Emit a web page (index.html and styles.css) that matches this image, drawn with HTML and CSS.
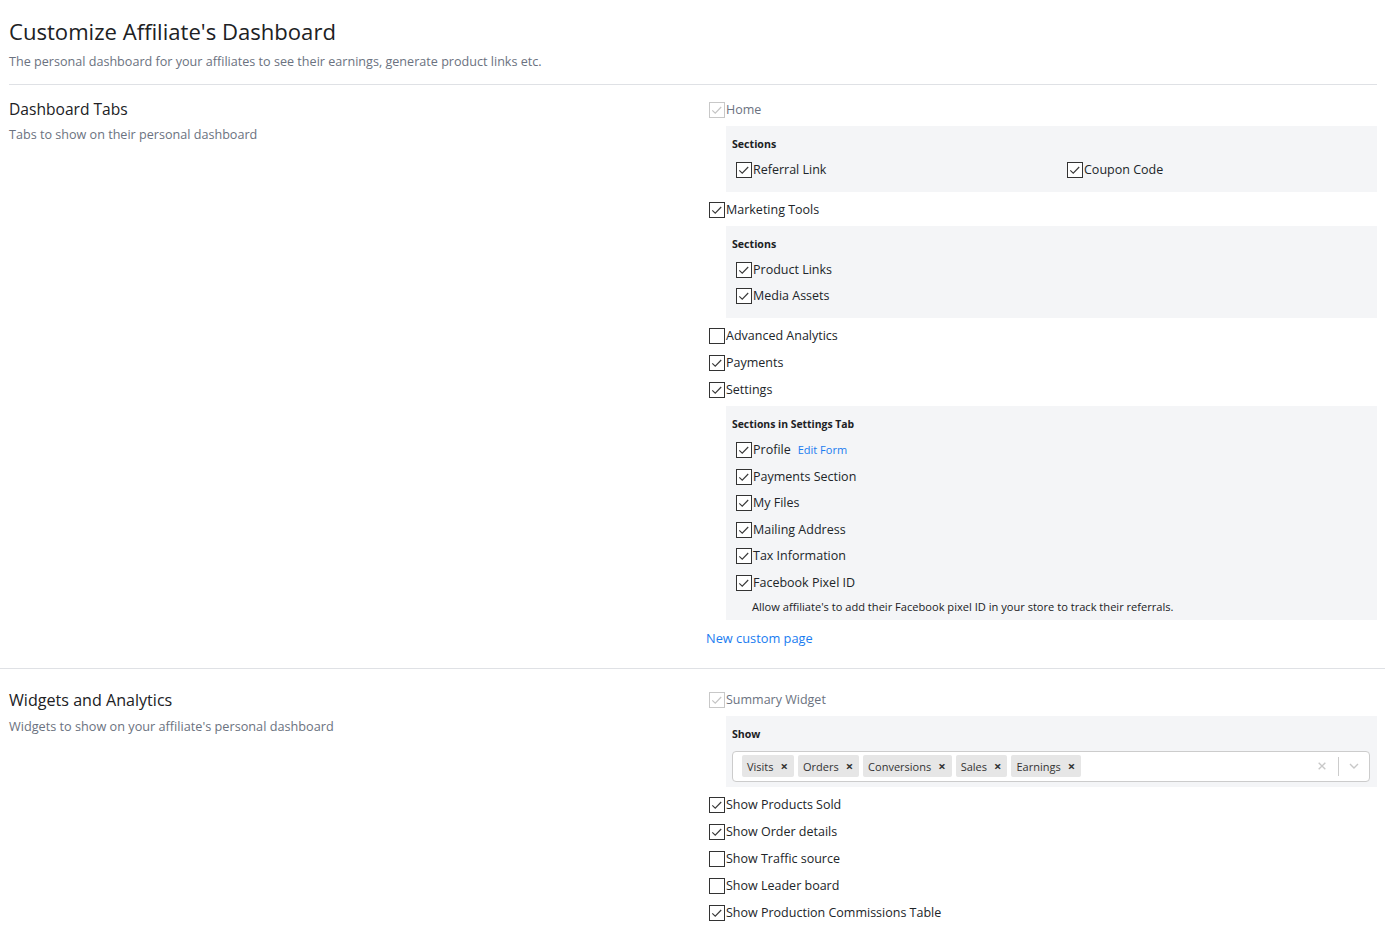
FILE: index.html
```html
<!DOCTYPE html>
<html lang="en">
<head>
<meta charset="utf-8">
<title>Customize Affiliate's Dashboard</title>
<link rel="stylesheet" href="styles.css">
</head>
<body>
<div class="page">
  <header class="page-head">
    <h1 class="page-title">Customize Affiliate's Dashboard</h1>
    <p class="page-sub">The personal dashboard for your affiliates to see their earnings, generate product links etc.</p>
  </header>

  <section class="setting setting-tabs">
    <div class="setting-info">
      <h2 class="setting-title">Dashboard Tabs</h2>
      <p class="setting-desc">Tabs to show on their personal dashboard</p>
    </div>
    <div class="setting-body">
      <label class="row disabled"><span class="cb on"><svg viewBox="0 0 16 16"><path d="M2.6 8.4 L6 11.6 L12.8 4.6"/></svg></span>Home</label>
      <div class="panel">
        <div class="panel-label">Sections</div>
        <div class="grid2">
          <label class="row"><span class="cb on"><svg viewBox="0 0 16 16"><path d="M2.6 8.4 L6 11.6 L12.8 4.6"/></svg></span>Referral Link</label>
          <label class="row"><span class="cb on"><svg viewBox="0 0 16 16"><path d="M2.6 8.4 L6 11.6 L12.8 4.6"/></svg></span>Coupon Code</label>
        </div>
      </div>
      <label class="row"><span class="cb on"><svg viewBox="0 0 16 16"><path d="M2.6 8.4 L6 11.6 L12.8 4.6"/></svg></span>Marketing Tools</label>
      <div class="panel">
        <div class="panel-label">Sections</div>
        <div class="list list-tight">
          <label class="row"><span class="cb on"><svg viewBox="0 0 16 16"><path d="M2.6 8.4 L6 11.6 L12.8 4.6"/></svg></span>Product Links</label>
          <label class="row"><span class="cb on"><svg viewBox="0 0 16 16"><path d="M2.6 8.4 L6 11.6 L12.8 4.6"/></svg></span>Media Assets</label>
        </div>
      </div>
      <label class="row"><span class="cb"></span>Advanced Analytics</label>
      <label class="row"><span class="cb on"><svg viewBox="0 0 16 16"><path d="M2.6 8.4 L6 11.6 L12.8 4.6"/></svg></span>Payments</label>
      <label class="row"><span class="cb on"><svg viewBox="0 0 16 16"><path d="M2.6 8.4 L6 11.6 L12.8 4.6"/></svg></span>Settings</label>
      <div class="panel panel-settings">
        <div class="panel-label">Sections in Settings Tab</div>
        <div class="list">
          <label class="row"><span class="cb on"><svg viewBox="0 0 16 16"><path d="M2.6 8.4 L6 11.6 L12.8 4.6"/></svg></span>Profile <a class="edit-link" href="#">Edit Form</a></label>
          <label class="row"><span class="cb on"><svg viewBox="0 0 16 16"><path d="M2.6 8.4 L6 11.6 L12.8 4.6"/></svg></span>Payments Section</label>
          <label class="row"><span class="cb on"><svg viewBox="0 0 16 16"><path d="M2.6 8.4 L6 11.6 L12.8 4.6"/></svg></span>My Files</label>
          <label class="row"><span class="cb on"><svg viewBox="0 0 16 16"><path d="M2.6 8.4 L6 11.6 L12.8 4.6"/></svg></span>Mailing Address</label>
          <label class="row"><span class="cb on"><svg viewBox="0 0 16 16"><path d="M2.6 8.4 L6 11.6 L12.8 4.6"/></svg></span>Tax Information</label>
          <label class="row"><span class="cb on"><svg viewBox="0 0 16 16"><path d="M2.6 8.4 L6 11.6 L12.8 4.6"/></svg></span>Facebook Pixel ID</label>
        </div>
        <p class="hint">Allow affiliate's to add their Facebook pixel ID in your store to track their referrals.</p>
      </div>
      <a class="new-page" href="#">New custom page</a>
    </div>
  </section>

  <section class="setting setting-widgets">
    <div class="setting-info">
      <h2 class="setting-title">Widgets and Analytics</h2>
      <p class="setting-desc">Widgets to show on your affiliate's personal dashboard</p>
    </div>
    <div class="setting-body">
      <label class="row disabled"><span class="cb on"><svg viewBox="0 0 16 16"><path d="M2.6 8.4 L6 11.6 L12.8 4.6"/></svg></span>Summary Widget</label>
      <div class="panel panel-show">
        <div class="panel-label">Show</div>
        <div class="multiselect">
          <div class="chips">
            <span class="chip">Visits<span class="chip-x">×</span></span>
            <span class="chip">Orders<span class="chip-x">×</span></span>
            <span class="chip">Conversions<span class="chip-x">×</span></span>
            <span class="chip">Sales<span class="chip-x">×</span></span>
            <span class="chip">Earnings<span class="chip-x">×</span></span>
          </div>
          <div class="indicators">
            <svg class="ind-clear" viewBox="0 0 12 12"><path d="M2 2 L10 10 M10 2 L2 10"/></svg>
            <span class="ind-sep"></span>
            <svg class="ind-chev" viewBox="0 0 12 12"><path d="M2 4 L6 8 L10 4"/></svg>
          </div>
        </div>
      </div>
      <label class="row"><span class="cb on"><svg viewBox="0 0 16 16"><path d="M2.6 8.4 L6 11.6 L12.8 4.6"/></svg></span>Show Products Sold</label>
      <label class="row"><span class="cb on"><svg viewBox="0 0 16 16"><path d="M2.6 8.4 L6 11.6 L12.8 4.6"/></svg></span>Show Order details</label>
      <label class="row"><span class="cb"></span>Show Traffic source</label>
      <label class="row"><span class="cb"></span>Show Leader board</label>
      <label class="row"><span class="cb on"><svg viewBox="0 0 16 16"><path d="M2.6 8.4 L6 11.6 L12.8 4.6"/></svg></span>Show Production Commissions Table</label>
    </div>
  </section>
</div>
</body>
</html>
```

FILE: styles.css
```css
* { box-sizing: border-box; }
html, body { margin: 0; padding: 0; background: #fff; }
body {
  font-family: "Open Sans", "Noto Sans", sans-serif;
  color: #212529;
  font-size: 13px;
}
.page { width: 1385px; }

.page-head {
  margin: 0 8px 0 9px;
  padding: 15px 0 14px;
  border-bottom: 1px solid #dfe1e5;
}
.page-title {
  margin: 0;
  font-size: 22.1px;
  font-weight: 400;
  line-height: 32px;
  color: #202124;
}
.page-sub {
  margin: 7px 0 0;
  font-size: 12.6px;
  line-height: 16px;
  color: #6b7280;
}

.setting {
  display: grid;
  grid-template-columns: 709px 1fr;
  padding-right: 8px;
}
.setting-tabs { padding-top: 17px; padding-bottom: 22px; border-bottom: 1px solid #dfe1e5; }
.setting-widgets { padding-top: 23px; }

.setting-info { padding-left: 9px; }
.setting-title {
  margin: -5px 0 0;
  font-size: 15.6px;
  font-weight: 400;
  line-height: 24px;
  color: #202124;
}
.setting-desc {
  margin: 6px 0 0;
  font-size: 12.6px;
  line-height: 16px;
  color: #6b7280;
}
.setting-widgets .setting-title { margin-top: -4px; font-size: 16.1px; }
.setting-widgets .setting-desc { font-size: 12.7px; margin-top: 6px; }

.setting-body { display: flex; flex-direction: column; align-items: flex-start; }

.row {
  display: flex;
  align-items: center;
  height: 16px;
  font-size: 12.5px;
  line-height: 16px;
  color: #212529;
  white-space: nowrap;
}
.row.disabled { color: #6b7280; }
.row + .row { margin-top: 11px; }
.row + .panel { margin-top: 8px; }
.panel + .row { margin-top: 10px; }

.cb {
  width: 16px;
  height: 16px;
  margin-right: 1px;
  border: 1px solid #333;
  background: #fff;
  flex: none;
  display: block;
}
.cb svg { display: block; width: 14px; height: 14px; }
.cb svg path { fill: none; stroke: #3a3a3a; stroke-width: 1.35; }
.disabled .cb { border-color: #c8c8c8; }
.disabled .cb svg path { stroke: #c4c4c4; }

.panel {
  align-self: stretch;
  margin-left: 17px;
  background: #f4f5f7;
  padding: 10px 7px 14px 6px;
}
.panel-label {
  font-size: 10.6px;
  font-weight: 700;
  line-height: 16px;
  color: #202124;
}
.panel-settings .panel-label { font-size: 10.4px; }
.grid2 {
  display: grid;
  grid-template-columns: 331px 1fr;
  margin: 10px 0 0 4px;
}
.grid2 .row + .row { margin-top: 0; }
.list { margin: 10px 0 0 4px; display: flex; flex-direction: column; }
.list .row + .row { margin-top: 10.6px; }
.list-tight .row + .row { margin-top: 10px; }

.edit-link {
  margin-left: 7px;
  font-size: 11px;
  color: #1a7cf0;
  text-decoration: none;
}

.panel-settings { padding-bottom: 5px; }
.hint {
  margin: 8px 0 0 20px;
  font-size: 11.1px;
  line-height: 16px;
  color: #202124;
}

.new-page {
  margin: 10px 0 0 -3px;
  font-size: 12.8px;
  line-height: 16px;
  color: #1a7cf0;
  text-decoration: none;
}

.panel-show { padding-bottom: 5px; }
.multiselect {
  margin-top: 9px;
  height: 31px;
  background: #fff;
  border: 1px solid #ccc;
  border-radius: 4px;
  display: flex;
  align-items: center;
  padding-left: 9px;
}
.chips { flex: 1; display: flex; gap: 4px; }
.chip {
  display: inline-flex;
  align-items: center;
  height: 22px;
  padding: 0 6px 0 5px;
  background: #e6e6e6;
  border-radius: 2px;
  font-size: 11px;
  color: #333;
}
.chip-x {
  margin-left: 7px;
  font-weight: 700;
  font-size: 13px;
  line-height: 1;
  color: #333;
}
.indicators { display: flex; align-items: center; height: 100%; }
.ind-clear { width: 10px; height: 10px; margin-right: 11px; }
.ind-clear path { stroke: #c8c8c8; stroke-width: 1.6; fill: none; }
.ind-sep { width: 1px; height: 19px; background: #ccc; }
.ind-chev { width: 12px; height: 12px; margin: 0 9px 0 9px; }
.ind-chev path { stroke: #c8c8c8; stroke-width: 1.4; fill: none; }
```
